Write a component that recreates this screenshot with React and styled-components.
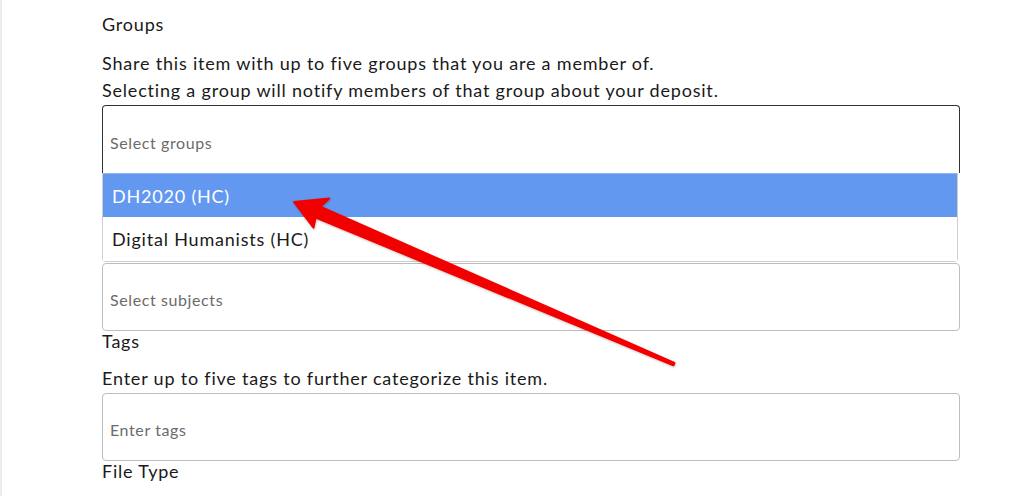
import React from "react";
import styled, { createGlobalStyle } from "styled-components";

const Global = createGlobalStyle`
  html, body { margin: 0; padding: 0; background: #fff; }
  body { font-family: Lato, "Open Sans", sans-serif; color: #1a1a1a; }
  * { box-sizing: border-box; }
`;

const Page = styled.div`
  position: relative;
  width: 1024px;
  height: 496px;
  overflow: hidden;
  border-left: 2px solid #ececec;
  padding-left: 100px;
  display: flex;
  flex-direction: column;
`;

const Label = styled.div`
  font-size: 18px;
  line-height: 18px;
  letter-spacing: 0.8px;
  margin-top: ${(p) => p.$mt || 0}px;
  color: #1a1a1a;
`;

const Description = styled.p`
  margin: ${(p) => p.$mt || 0}px 0 0 0;
  font-size: 18px;
  line-height: 26.5px;
  letter-spacing: 0.8px;
  color: #1a1a1a;
`;

const Field = styled.div`
  width: 858px;
  height: 68px;
  margin-top: ${(p) => p.$mt || 0}px;
  border: 1px solid ${(p) => (p.$focused ? "#333" : "#bdbdbd")};
  border-bottom: ${(p) => (p.$open ? "none" : `1px solid ${p.$focused ? "#333" : "#bdbdbd"}`)};
  border-radius: ${(p) => (p.$open ? "4px 4px 0 0" : "4px")};
  display: flex;
  align-items: center;
  padding: 5px 0 0 7px;
  font-size: 16px;
  letter-spacing: 0.6px;
  color: #6b6b6b;
  background: #fff;
`;

const Menu = styled.div`
  width: 856px;
  border: 1px solid #cfcfcf;
  border-top: none;
  border-radius: 0 0 4px 4px;
  display: flex;
  flex-direction: column;
`;

const Option = styled.div`
  height: 44px;
  display: flex;
  align-items: center;
  padding-left: 9px;
  font-size: 18px;
  letter-spacing: 0.8px;
  background: ${(p) => (p.$active ? "#6398f1" : "#fff")};
  color: ${(p) => (p.$active ? "#fff" : "#1a1a1a")};
  border-top: ${(p) => (p.$active ? "1px solid #8fb6f5" : "none")};
`;

const Arrow = styled.svg`
  position: absolute;
  left: 0;
  top: 0;
  pointer-events: none;
`;

export default function App() {
  return (
    <>
      <Global />
      <Page>
        <Label $mt={15}>Groups</Label>
        <Description $mt={17}>
          Share this item with up to five groups that you are a member of.
          <br />
          Selecting a group will notify members of that group about your deposit.
        </Description>
        <Field $mt={2} $focused $open>Select groups</Field>
        <Menu>
          <Option $active>DH2020 (HC)</Option>
          <Option>Digital Humanists (HC)</Option>
        </Menu>
        <Field $mt={1}>Select subjects</Field>
        <Label $mt={1}>Tags</Label>
        <Description $mt={15}>
          Enter up to five tags to further categorize this item.
        </Description>
        <Field $mt={1}>Enter tags</Field>
        <Label $mt={1}>File Type</Label>
        <Arrow width="1024" height="496" viewBox="0 0 1024 496">
          <defs>
            <filter id="sh" x="-10%" y="-10%" width="120%" height="120%">
              <feDropShadow dx="0.5" dy="1" stdDeviation="0.8" floodColor="#000" floodOpacity="0.25" />
            </filter>
          </defs>
          <polygon
            points="292,202 327.2,198.5 318.3,206.7 672.4,363 671.4,365.3 313.6,217.7 311.5,227.7"
            fill="#f20000"
            stroke="#f20000"
            strokeWidth="2"
            strokeLinejoin="round"
            filter="url(#sh)"
          />
        </Arrow>
      </Page>
    </>
  );
}
